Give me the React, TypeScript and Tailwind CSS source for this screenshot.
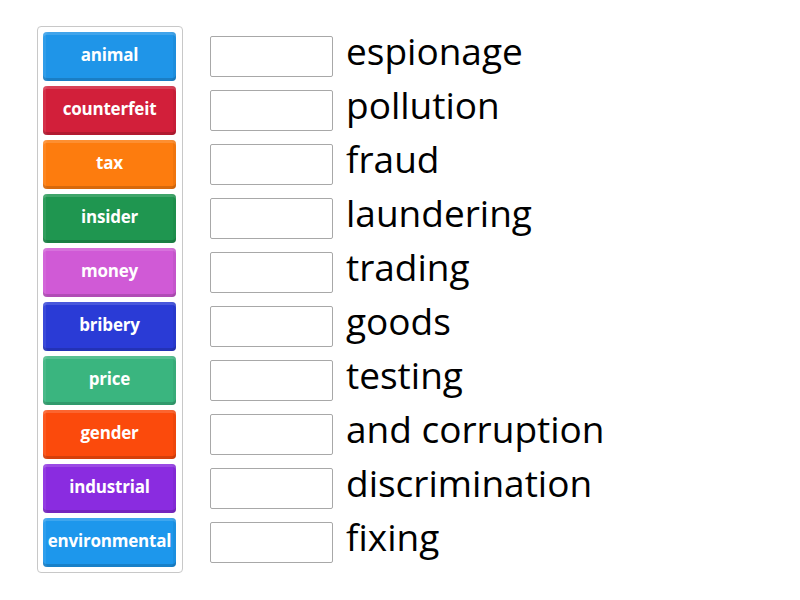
import React from "react";

const tiles = [
  { label: "animal", color: "bg-[#1f95e8]" },
  { label: "counterfeit", color: "bg-[#d21f3a]" },
  { label: "tax", color: "bg-[#fd7c0e]" },
  { label: "insider", color: "bg-[#1f9650]" },
  { label: "money", color: "bg-[#d05ad6]" },
  { label: "bribery", color: "bg-[#2a3bd6]" },
  { label: "price", color: "bg-[#3ab57f]" },
  { label: "gender", color: "bg-[#fb4a0c]" },
  { label: "industrial", color: "bg-[#8a2ce0]" },
  { label: "environmental", color: "bg-[#1d97ec]" },
];

const targets = [
  "espionage",
  "pollution",
  "fraud",
  "laundering",
  "trading",
  "goods",
  "testing",
  "and corruption",
  "discrimination",
  "fixing",
];

export default function App() {
  return (
    <div
      className="w-[800px] h-[600px] bg-white relative"
      style={{ fontFamily: "'Open Sans', 'Noto Sans', sans-serif" }}
    >
      <div className="flex pt-[26px] pl-[37px]">
        {/* Tiles */}
        <div className="w-[146px] border border-[#c8c8c8] rounded-[4px] pl-[5px] pr-[6px] py-[5px] flex flex-col gap-[5px]">
          {tiles.map((t) => (
            <div
              key={t.label}
              className={`${t.color} h-[49px] pb-[3px] rounded-[4px] flex items-center justify-center text-white font-bold text-[17px] tracking-[-0.2px] shadow-[inset_0_3px_0_rgba(255,255,255,0.15),inset_0_-3px_0_rgba(0,0,0,0.15),inset_3px_0_0_rgba(255,255,255,0.08),inset_-3px_0_0_rgba(0,0,0,0.05)]`}
            >
              {t.label}
            </div>
          ))}
        </div>

        {/* Targets */}
        <div className="ml-[27px] pt-[10px] flex flex-col gap-[13px]">
          {targets.map((t) => (
            <div key={t} className="flex items-center h-[41px]">
              <div className="w-[123px] h-[41px] border border-[#a8a8a8] rounded-[2px] bg-white" />
              <span className="ml-[13px] pb-[12px] text-[37px] leading-none text-black">{t}</span>
            </div>
          ))}
        </div>
      </div>
    </div>
  );
}
